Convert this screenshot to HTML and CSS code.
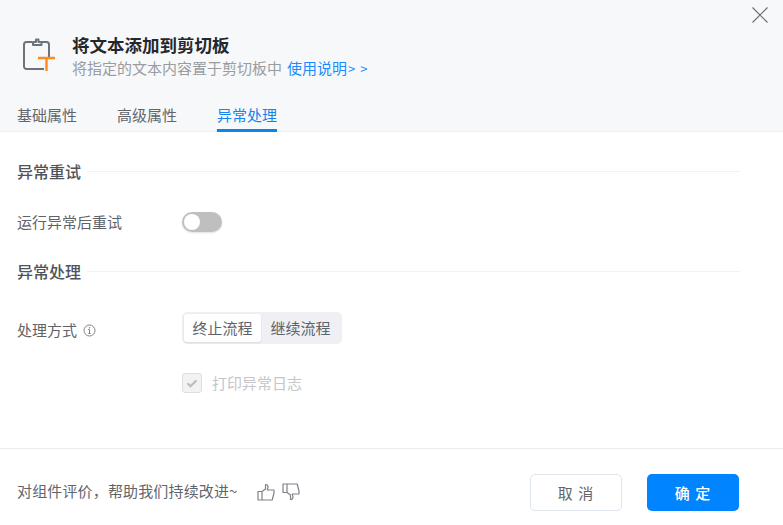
FILE: index.html
```html
<!DOCTYPE html>
<html lang="zh">
<head>
<meta charset="utf-8">
<title>将文本添加到剪切板</title>
<link rel="stylesheet" href="styles.css">
</head>
<body>
<div class="dialog">
  <header class="head">
    <button class="close" aria-label="关闭">
      <svg width="18" height="18" viewBox="0 0 18 18"><path d="M1.500 1.500l15 15M16.500 1.500l-15 15" stroke="#6b7078" stroke-width="1.200" fill="none"/></svg>
    </button>
    <div class="intro">
      <svg class="logo" width="34" height="34" viewBox="0 0 34 34" fill="none">
        <path d="M10 4H4.500A2.500 2.500 0 0 0 2 6.500V28.500A2.500 2.500 0 0 0 4.500 31H22M20 4h4.500A2.500 2.500 0 0 1 27 6.500V19" stroke="#6c737b" stroke-width="2"/>
        <path d="M11 7V4h3V1.500h2.500V4H19.500v3z" stroke="#6c737b" stroke-width="2" stroke-linejoin="round"/>
        <path d="M16 20h17M24.500 20v13" stroke="#ff8a1f" stroke-width="2.400"/>
      </svg>
      <div class="intro-text">
        <h1 class="title">将文本添加到剪切板</h1>
        <p class="desc">将指定的文本内容置于剪切板中<a class="link">使用说明<span class="arrows">&gt; &gt;</span></a></p>
      </div>
    </div>
    <nav class="tabs">
      <span class="tab">基础属性</span>
      <span class="tab">高级属性</span>
      <span class="tab tab-active">异常处理</span>
    </nav>
  </header>
  <main class="body">
    <div class="section-title"><span class="section-name">异常重试</span><i class="rule"></i></div>
    <div class="row row-retry">
      <span class="label">运行异常后重试</span>
      <span class="switch"><i class="knob"></i></span>
    </div>
    <div class="section-title"><span class="section-name">异常处理</span><i class="rule"></i></div>
    <div class="row row-mode">
      <span class="label label-mode">处理方式
        <svg class="info" width="13" height="13" viewBox="0 0 13 13" fill="none"><circle cx="6.500" cy="6.500" r="5.500" stroke="#7d8289"/><path d="M6.500 5.500v4M5.300 9.500h2.400M5.300 5.500h1.200" stroke="#7d8289"/><circle cx="6.500" cy="3.700" r=".7" fill="#7d8289"/></svg>
      </span>
      <div class="segment">
        <span class="seg seg-on">终止流程</span>
        <span class="seg">继续流程</span>
      </div>
    </div>
    <div class="row row-check">
      <span class="label"></span>
      <span class="check"><svg width="14" height="14" viewBox="0 0 14 14" fill="none"><path d="M2.500 7.200l3 3 6-6" stroke="#bcbcbc" stroke-width="2.200"/></svg></span>
      <span class="check-text">打印异常日志</span>
    </div>
  </main>
  <footer class="foot">
    <span class="feedback">对组件评价，帮助我们持续改进~</span>
    <svg class="thumb" width="18" height="18" viewBox="0 0 18 18" fill="none"><path d="M1 8.500h4V17H1zM5 8.500L8.500 6V1.500c2 0 2.500 1 2.500 2.500L10.300 7H17v3l-1.800 7H5" stroke="#7d8289" stroke-width="1.200" stroke-linejoin="round"/></svg>
    <svg class="thumb thumb-down" width="18" height="18" viewBox="0 0 18 18" fill="none"><path d="M1 1h4v8.500H1zM5 9.500L8.500 12v4.500c2 0 2.500-1 2.500-2.500L10.300 11H17V8L15.200 1H5" stroke="#7d8289" stroke-width="1.200" stroke-linejoin="round"/></svg>
    <button class="btn btn-cancel">取 消</button>
    <button class="btn btn-ok">确 定</button>
  </footer>
</div>
</body>
</html>
```
FILE: styles.css
```css
* { box-sizing: border-box; }
html, body { margin: 0; padding: 0; background: #fff; }
body { font-family: "Noto Sans CJK SC", "Noto Sans", sans-serif; color: #5f6369; font-size: 15px; }
.dialog { width: 783px; height: 525px; display: flex; flex-direction: column; overflow: hidden; }

.head { position: relative; height: 132px; background: #f7f8fa; border-bottom: 1px solid #eef0f3; padding: 32px 0 0 17px; }
.close { position: absolute; right: 14px; top: 6px; width: 18px; height: 18px; padding: 0; border: 0; background: none; }
.close svg { display: block; }
.intro { display: flex; align-items: flex-start; height: 67px; }
.logo { display: block; margin: 6px 16px 0 5px; flex: none; overflow: visible; }
.title { margin: 0; font-size: 17.500px; line-height: 26px; font-weight: 700; color: #24272c; }
.desc { margin: 0; font-size: 15px; line-height: 20px; color: #999ca1; }
.link { color: #1a8cff; margin-left: 5px; }
.arrows { letter-spacing: 1px; font-size: 13px; margin-left: 1px; }

.tabs { display: flex; gap: 40px; }
.tab { font-size: 15px; line-height: 22px; height: 33px; padding-top: 5px; color: #61666c; }
.tab-active { color: #1485ee; border-bottom: 3px solid #0a84f0; }

.body { flex: 1; padding: 27px 43px 0 17px; }
.section-title { display: flex; align-items: center; gap: 6px; height: 26px; font-size: 16px; font-weight: 500; color: #50545a; }
.section-name { padding-bottom: 2px; }
.rule { flex: 1; height: 1px; background: #f0f2f5; margin-top: -1px; }
.row { display: flex; align-items: center; }
.label { width: 165px; flex: none; font-size: 15px; color: #5f6369; padding-bottom: 2px; }
.label-mode { padding: 2px 0 0; }
.row-retry { height: 50px; margin: 12px 0; }
.switch { display: block; width: 40px; height: 20px; border-radius: 10px; background: #bfbfbf; position: relative; box-shadow: 0 1px 2px rgba(0,0,0,.12); }
.knob { position: absolute; left: 2px; top: 2px; width: 16px; height: 16px; border-radius: 50%; background: #fff; }
.row-mode { height: 32px; margin-top: 27px; }
.info { vertical-align: -1px; margin-left: 3px; }
.segment { display: flex; height: 32px; width: 160px; padding: 2px 0 2px 2px; border-radius: 5px; background: #eef0f4; }
.seg { width: 79px; line-height: 27px; text-align: center; font-size: 15px; color: #5f6369; border-radius: 3px; }
.seg-on { width: 77px; background: #fff; box-shadow: 0 1px 2px rgba(0,0,0,.1); }
.row-check { height: 20px; margin-top: 29px; }
.check { width: 20px; height: 20px; border: 1px solid #dedede; border-radius: 3px; background: #f2f2f2; display: flex; align-items: center; justify-content: center; flex: none; }
.check-text { margin-left: 10px; color: #c4c6c9; font-size: 15px; padding-bottom: 2px; }

.foot { height: 77px; border-top: 1px solid #e9ebee; display: flex; align-items: center; padding: 10px 44px 0 17px; }
.feedback { font-size: 15px; color: #61666c; width: 240px; flex: none; line-height: 22px; padding-bottom: 3px; letter-spacing: .15px; }
.thumb { display: block; flex: none; margin-bottom: 1px; }
.thumb-down { margin-left: 7px; }
.btn { width: 92px; height: 37px; border-radius: 5px; font: 15px "Noto Sans CJK SC", "Noto Sans", sans-serif; letter-spacing: 1px; padding: 0; }
.btn-cancel { margin-left: auto; background: #fff; border: 1px solid #dfe5ec; color: #62666c; }
.btn-ok { margin-left: 25px; background: #0084ff; border: 0; color: #fff; font-weight: 500; }
```
